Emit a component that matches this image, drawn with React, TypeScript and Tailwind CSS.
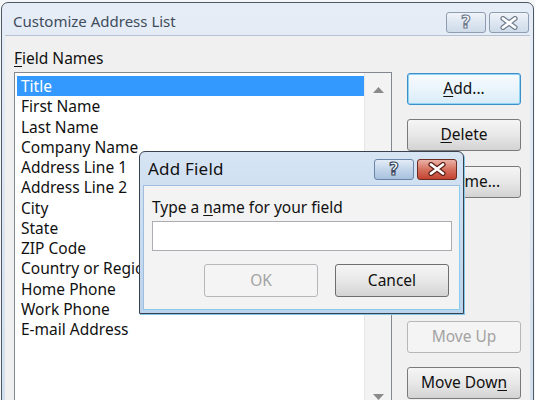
import React from 'react'

const fields = [
  'Title',
  'First Name',
  'Last Name',
  'Company Name',
  'Address Line 1',
  'Address Line 2',
  'City',
  'State',
  'ZIP Code',
  'Country or Region',
  'Home Phone',
  'Work Phone',
  'E-mail Address',
]

function CaptionButtons({ active }: { active: boolean }) {
  return (
    <div className="flex gap-[3px]">
      <div
        className={
          active
            ? 'w-[40px] h-[21px] rounded-[3px] border border-[#6a84a6] bg-gradient-to-b from-[#e3ecf7] via-[#c3d5ea] to-[#a9c1de] flex items-center justify-center'
            : 'w-[40px] h-[21px] rounded-[3px] border border-[#8e9db1] bg-gradient-to-b from-[#f0f4f9] via-[#dde6f1] to-[#cfdbe9] flex items-center justify-center'
        }
      >
        <span
          className={
            active
              ? "font-['DejaVu_Sans',sans-serif] text-[17px] font-bold leading-none text-white [-webkit-text-stroke:1.2px_#3b4a5e]"
              : "font-['DejaVu_Sans',sans-serif] text-[17px] font-bold leading-none text-white [-webkit-text-stroke:1.2px_#6f7d8e]"
          }
        >
          ?
        </span>
      </div>
      <div
        className={
          active
            ? 'w-[40px] h-[21px] rounded-[3px] border border-[#6b2c22] bg-gradient-to-b from-[#eab1a6] via-[#d5705f] to-[#c4422f] flex items-center justify-center'
            : 'w-[40px] h-[21px] rounded-[3px] border border-[#8e9db1] bg-gradient-to-b from-[#f0f4f9] via-[#dde6f1] to-[#cfdbe9] flex items-center justify-center'
        }
      >
        <svg width="20" height="14" viewBox="0 0 20 14">
          <path d="M4 2.5 L16 11.5 M16 2.5 L4 11.5" stroke={active ? '#5a2018' : '#6f7d8e'} strokeWidth="5.2" strokeLinecap="round" />
          <path d="M4 2.5 L16 11.5 M16 2.5 L4 11.5" stroke="#ffffff" strokeWidth="2.8" strokeLinecap="round" />
        </svg>
      </div>
    </div>
  )
}

function WinButton({
  children,
  disabled,
  focused,
}: {
  children: React.ReactNode
  disabled?: boolean
  focused?: boolean
}) {
  let cls =
    'w-[114px] h-[32px] rounded-[3px] border flex items-center justify-center text-[15.5px] '
  if (disabled) {
    cls += 'border-[#b5b8bb] bg-[#f4f4f4] text-[#a3a3a3]'
  } else if (focused) {
    cls +=
      'border-[#3c8fc8] shadow-[inset_0_0_0_1px_#8fd3f5] bg-gradient-to-b from-[#f7fbfe] via-[#eaf4fb] to-[#d9ecf8] text-[#111]'
  } else {
    cls +=
      'border-[#7a7a7a] bg-gradient-to-b from-[#f5f5f5] via-[#e8e8e8] to-[#d3d3d3] text-[#111]'
  }
  return <div className={cls}>{children}</div>
}

export default function App() {
  return (
    <div className="w-[535px] h-[400px] overflow-hidden relative bg-[#f4f6f8] font-['Noto_Sans',sans-serif] text-[#111]">
      {/* main window */}
      <div className="mt-[2px] ml-[1px] w-[533px] h-[420px] border border-[#4e5966] rounded-t-[7px] bg-gradient-to-b from-[#e6edf6] to-[#d2deec] px-[3px] flex flex-col">
        <div className="h-[32px] flex items-center justify-between pl-[8px] pr-[1px]">
          <span className="mt-[4px] text-[15px] text-[#404c5b]">Customize Address List</span>
          <div className="mt-[7px]">
            <CaptionButtons active={false} />
          </div>
        </div>
        <div className="flex-1 bg-[#f0f0f0] border-t border-[#b6c3d3] pl-[9px] pt-[12px] flex flex-col">
          <div className="h-[21px] leading-[21px] text-[15.5px]">
            <span className="underline underline-offset-2">F</span>ield Names
          </div>
          <div className="flex mt-[3px]">
            <div className="w-[378px] h-[340px] border border-[#828790] bg-white flex">
              <div className="flex-1 pl-[2px] pt-[3px]">
                {fields.map((f, i) => (
                  <div
                    key={f}
                    className={
                      i === 0
                        ? 'h-[20.25px] leading-[20px] pl-[4px] bg-[#3399ff] text-white text-[15.5px] whitespace-nowrap'
                        : 'h-[20.25px] leading-[20px] pl-[4px] text-[15.5px] whitespace-nowrap'
                    }
                  >
                    {f}
                  </div>
                ))}
              </div>
              <div className="w-[27px] bg-[#f3f3f3] border-l border-[#e6e6e6] flex flex-col items-center justify-between pt-[14px] pb-[11px]">
                <svg width="11" height="6" viewBox="0 0 11 6">
                  <path d="M0 6 L5.5 0 L11 6 Z" fill="#8a8a8a" />
                </svg>
                <svg width="11" height="6" viewBox="0 0 11 6">
                  <path d="M0 0 L5.5 6 L11 0 Z" fill="#8a8a8a" />
                </svg>
              </div>
            </div>
            <div className="ml-[15px] mt-[1px] flex flex-col">
              <WinButton focused>
                <span>
                  <span className="underline underline-offset-2">A</span>dd...
                </span>
              </WinButton>
              <div className="mt-[14px]">
                <WinButton>
                  <span>
                    <span className="underline underline-offset-2">D</span>elete
                  </span>
                </WinButton>
              </div>
              <div className="mt-[15px]">
                <WinButton>
                  <span>
                    <span className="underline underline-offset-2">R</span>ename...
                  </span>
                </WinButton>
              </div>
              <div className="mt-[123px]">
                <WinButton disabled>Move Up</WinButton>
              </div>
              <div className="mt-[14px]">
                <WinButton>
                  <span>
                    Move Dow<span className="underline underline-offset-2">n</span>
                  </span>
                </WinButton>
              </div>
            </div>
          </div>
        </div>
      </div>

      {/* Add Field dialog */}
      <div className="absolute left-[139px] top-[151px] w-[325px] h-[163px] border border-[#38424f] rounded-t-[6px] bg-gradient-to-b from-[#d6e4f3] to-[#bcd3ec] px-[3px] pb-[3px] flex flex-col shadow-[1px_1px_0_#7fc6e8]">
        <div className="h-[33px] flex items-center justify-between pl-[5px] pr-[3px]">
          <span className="text-[17px] text-[#111] tracking-[0.2px]">Add Field</span>
          <div className="mt-[1px]">
            <CaptionButtons active />
          </div>
        </div>
        <div className="flex-1 bg-[#f3f3f3] border border-[#9fbddf] border-r-[#86cdee] border-b-[#86cdee] pl-[8px] pr-[7px] pt-[11px]">
          <div className="h-[20px] leading-[20px] text-[15.5px]">
            Type a <span className="underline underline-offset-2">n</span>ame for your field
          </div>
          <div className="mt-[4px] h-[30px] border border-[#abadb3] bg-white" />
          <div className="mt-[13px] flex justify-end gap-[17px] pr-[3px]">
            <div className="w-[114px] h-[33px] rounded-[3px] border border-[#b5b8bb] bg-[#f4f4f4] text-[#a3a3a3] text-[15.5px] flex items-center justify-center">
              OK
            </div>
            <div className="w-[114px] h-[33px] rounded-[3px] border border-[#6f6f6f] bg-gradient-to-b from-[#f5f5f5] via-[#e8e8e8] to-[#d3d3d3] text-[15.5px] flex items-center justify-center">
              Cancel
            </div>
          </div>
        </div>
      </div>
    </div>
  )
}
